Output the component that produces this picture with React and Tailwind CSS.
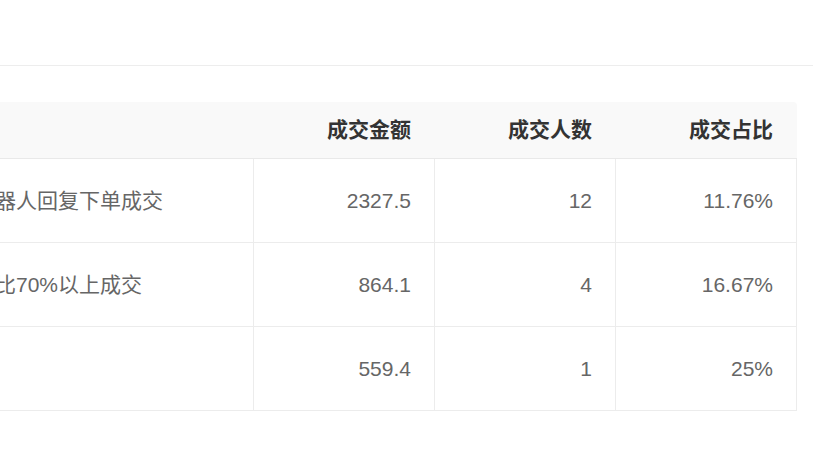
const rows = [
  { name: '由智能机器人回复下单成交', amount: '2327.5', people: '12', ratio: '11.76%' },
  { name: '人工介入比70%以上成交', amount: '864.1', people: '4', ratio: '16.67%' },
  { name: '其他', amount: '559.4', people: '1', ratio: '25%' },
]

const App = () => (
  <div className="w-[813px] h-[462px] bg-white overflow-hidden font-['Liberation_Sans','Noto_Sans_CJK_SC',sans-serif] text-[21px]">
    <div className="h-[65px]" />
    <div className="h-px bg-[#ededed]" />

    <div className="pt-[36px]">
      <div className="ml-[-103px] w-[900px]">
        {/* header */}
        <div className="flex h-[57px] bg-[#f9f9f9] rounded-tr-[4px] border-b border-[#e9e9e9] text-[#333] font-bold">
          <div className="w-[357px] pl-[14px] flex items-center">成交方式</div>
          {['成交金额', '成交人数', '成交占比'].map((h) => (
            <div key={h} className="w-[181px] pr-[24px] flex items-center justify-end">{h}</div>
          ))}
        </div>

        {/* body */}
        {rows.map((r) => (
          <div key={r.name} className="flex h-[84px] border-b border-[#ececec] text-[#666]">
            <div className="w-[357px] pl-[14px] flex items-center border-r border-[#ececec] whitespace-nowrap">{r.name}</div>
            <div className="w-[181px] pr-[23px] flex items-center justify-end border-r border-[#ececec]">{r.amount}</div>
            <div className="w-[181px] pr-[23px] flex items-center justify-end border-r border-[#ececec]">{r.people}</div>
            <div className="w-[181px] pr-[23px] flex items-center justify-end border-r border-[#ececec]">{r.ratio}</div>
          </div>
        ))}
      </div>
    </div>
  </div>
)

export default App
